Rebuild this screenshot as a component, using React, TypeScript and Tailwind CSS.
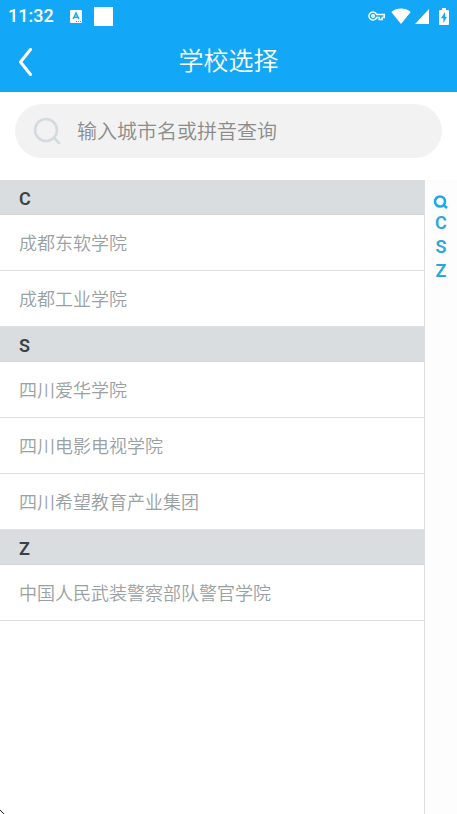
const groups = [
    { letter: 'C', schools: ['成都东软学院', '成都工业学院'] },
    { letter: 'S', schools: ['四川爱华学院', '四川电影电视学院', '四川希望教育产业集团'] },
    { letter: 'Z', schools: ['中国人民武装警察部队警官学院'] },
]

const StatusBar = () => {
    return (
        <div className="flex h-8 items-center justify-between pl-2 pr-2 text-white">
            <div className="flex items-center">
                <span className="w-[62px] text-lg leading-8 font-medium">11:32</span>
                <svg width="12" height="13" viewBox="0 0 12 13" aria-hidden="true">
                    <rect width="12" height="13" rx="1" fill="#fff" />
                    <path d="M3.2 9 L6 3 L8.8 9 M4.2 7.2 H7.8" fill="none" stroke="#12a8f7" strokeWidth="1.5" />
                    <path d="M6 11.5h1M8 11.5h1M10 11.5h1" stroke="#12a8f7" strokeWidth="1" />
                </svg>
                <span className="ml-3 h-[19px] w-[19px] bg-white" />
            </div>
            <div className="flex items-center">
                <svg width="17" height="10" viewBox="0 0 17 10" fill="none" stroke="#fff" strokeWidth="1.5" aria-hidden="true">
                    <path d="M8.6 3.4 A4 4 0 1 0 8.6 6.6 H11.2 V8.6 H14.2 V6.6 H16.2 V3.4 Z" />
                    <circle cx="5" cy="5" r="1.3" />
                </svg>
                <svg className="ml-1.5" width="20" height="16" viewBox="0 0 20 16" aria-hidden="true">
                    <path d="M0.3 4 C5.5 -0.6 14.5 -0.6 19.7 4 L10 16 Z" fill="#fff" />
                </svg>
                <svg className="ml-1" width="14" height="15" viewBox="0 0 14 15" aria-hidden="true">
                    <path d="M14 0 V15 H0 Z" fill="#fff" />
                </svg>
                <svg className="ml-2.5" width="10" height="17" viewBox="0 0 10 17" aria-hidden="true">
                    <path d="M3 0 H7 V2 H9 Q10 2 10 3 V16 Q10 17 9 17 H1 Q0 17 0 16 V3 Q0 2 1 2 H3 Z" fill="#fff" />
                    <path d="M6 4 L2 10.2 H4.4 V15 L8 8.7 H6 Z" fill="#12a8f7" />
                </svg>
            </div>
        </div>
    )
}

const App = () => {
    return (
        <div className="relative flex min-h-screen flex-col bg-white font-[Roboto,'Noto_Sans_CJK_SC',sans-serif]">
            <header className="bg-[#12a8f7]">
                <StatusBar />
                <div className="grid h-[60px] grid-cols-[48px_1fr_48px] items-center text-white">
                    <button type="button" aria-label="返回" className="flex h-full items-center pl-[18px]">
                        <svg width="15" height="28" viewBox="0 0 15 28" fill="none" stroke="#fff" strokeWidth="3" strokeLinecap="round" strokeLinejoin="round">
                            <path d="M12.5 1.5 L2.5 14 L12.5 26.5" />
                        </svg>
                    </button>
                    <h1 className="text-center text-[25px] leading-[60px] font-[350]">学校选择</h1>
                </div>
            </header>

            <div className="px-[15px] pt-3 pb-[22px]">
                <label className="flex h-[54px] items-center rounded-full bg-[#f2f2f2] pl-[18px]">
                    <svg width="28" height="28" viewBox="0 0 28 28" fill="none" stroke="#d3dbde" strokeWidth="2.6" strokeLinecap="round" aria-hidden="true">
                        <circle cx="13" cy="13" r="11" />
                        <path d="M21 21 L26 26" />
                    </svg>
                    <input
                        type="text"
                        aria-label="输入城市名或拼音查询"
                        placeholder="输入城市名或拼音查询"
                        className="ml-4 h-full min-w-0 flex-1 bg-transparent pt-0.5 text-xl font-[350] text-[#666] outline-none placeholder:text-[#8c8c8c]"
                    />
                </label>
            </div>

            <div className="flex flex-1">
                <main className="flex-1 border-r border-[#dcdfe1]">
                    {groups.map((group) => (
                        <section key={group.letter} id={group.letter}>
                            <h2 className="h-[35px] border-b border-[#d3d6d9] bg-[#dadde0] pl-[19px] text-lg leading-[37px] font-semibold text-[#3b4245]">{group.letter}</h2>
                            <ul>
                                {group.schools.map((school) => (
                                    <li key={school} className="h-14 border-b border-[#dfe1e2] pl-[19px] text-lg leading-[58px] font-[350] text-[#99a1a3]">{school}</li>
                                ))}
                            </ul>
                        </section>
                    ))}
                </main>
                <nav className="flex w-8 flex-col items-center bg-[#fdfdfd] pt-3 text-lg leading-6 font-semibold text-[#25a9dc]">
                    <button type="button" aria-label="搜索" className="flex h-[19px] items-center">
                        <svg width="16" height="14" viewBox="0 0 16 14" fill="none" stroke="#1aaaf0" strokeWidth="2.6">
                            <circle cx="7" cy="6.5" r="5" />
                            <path d="M10 9.5 L14 13" />
                        </svg>
                    </button>
                    {groups.map((group) => (
                        <a key={group.letter} href={'#' + group.letter}>{group.letter}</a>
                    ))}
                </nav>
            </div>

            <svg className="absolute bottom-0 left-0" width="4" height="4" viewBox="0 0 4 4" aria-hidden="true">
                <path d="M0 0h1v1h1v1h-1v-1h-1zM2 2h1v1h1v1h-1v-1h-1z" fill="#222" />
            </svg>
        </div>
    )
}

export default App
